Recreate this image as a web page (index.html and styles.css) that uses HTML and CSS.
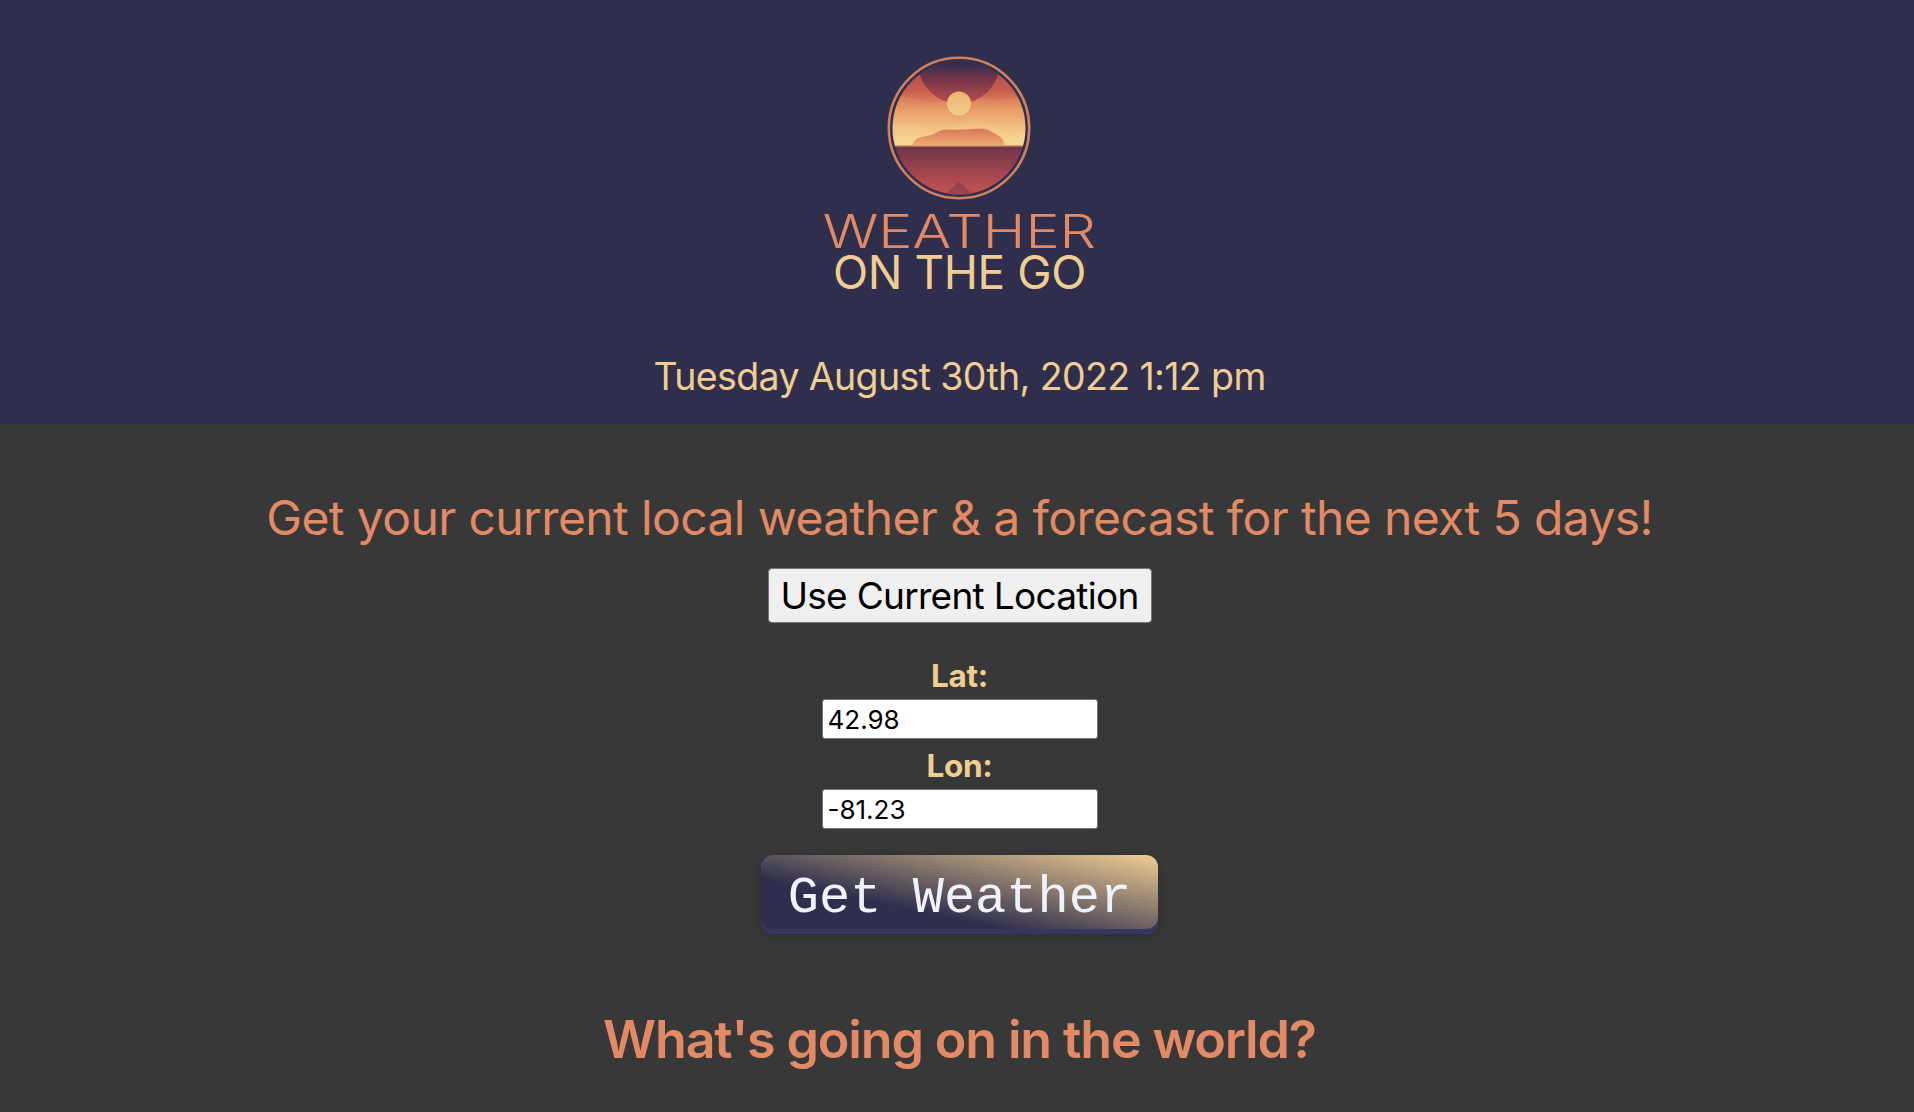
FILE: index.html
```html
<!DOCTYPE html>
<html lang="en">
<head>
<meta charset="utf-8">
<title>Weather on the Go</title>
<link rel="stylesheet" href="styles.css">
</head>
<body>
<header class="site-header">
  <div class="logo">
    <svg class="logo-mark" width="146" height="146" viewBox="0 0 146 146" aria-hidden="true">
      <defs>
        <linearGradient id="sky" x1="0" y1="0" x2="0" y2="1">
          <stop offset="0" stop-color="#a9414f"/>
          <stop offset="0.36" stop-color="#c95f50"/>
          <stop offset="0.58" stop-color="#e99a66"/>
          <stop offset="0.8" stop-color="#f2c682"/>
          <stop offset="1" stop-color="#f7e49c"/>
        </linearGradient>
        <linearGradient id="dome" x1="0" y1="0" x2="0" y2="1">
          <stop offset="0.5" stop-color="#2f2b4c"/>
          <stop offset="0.7" stop-color="#753549"/>
          <stop offset="1" stop-color="#b84e4f"/>
        </linearGradient>
        <linearGradient id="sea" x1="0" y1="0" x2="0" y2="1">
          <stop offset="0" stop-color="#70344a"/>
          <stop offset="1" stop-color="#bc5051"/>
        </linearGradient>
        <linearGradient id="rock" x1="0" y1="0" x2="0" y2="1">
          <stop offset="0" stop-color="#d8765a"/>
          <stop offset="1" stop-color="#efae72"/>
        </linearGradient>
        <linearGradient id="sun" x1="0" y1="0" x2="0" y2="1">
          <stop offset="0" stop-color="#eeb074"/>
          <stop offset="1" stop-color="#f3cd88"/>
        </linearGradient>
        <clipPath id="scene"><circle cx="73" cy="73" r="66.5"/></clipPath>
      </defs>
      <circle cx="73" cy="73" r="70.2" fill="none" stroke="#cf8160" stroke-width="2.6"/>
      <g clip-path="url(#scene)">
        <rect x="0" y="6" width="146" height="85" fill="url(#sky)"/>
        <path d="M0 46 Q14 38 30 44 T62 46 T100 44 T146 40 V91 H0Z" fill="#f0b477" opacity=".16"/>
        <path d="M0 72 Q16 64 34 72 T74 70 T112 72 T146 66 V91 H0Z" fill="#f6e098" opacity=".14"/>
        <circle cx="73" cy="7.500" r="41" fill="url(#dome)"/>
        <circle cx="73" cy="48.500" r="12" fill="url(#sun)"/>
        <path d="M26 91 Q28 84 34 82.500 L47 79.500 Q54 74.500 60 74.500 Q80 75 96 73.500 Q102 74 106 77 L114 81.500 Q118 85 119 91Z" fill="url(#rock)"/>
        <rect x="0" y="91" width="146" height="42" fill="url(#sea)"/>
        <rect x="0" y="133" width="146" height="13" fill="#bc5051"/>
        <path d="M58 141 L73 126 L88 141Z" fill="#9a4350"/>
        <rect x="0" y="90" width="146" height="1.500" fill="#dba070"/>
      </g>
    </svg>
    <div class="logo-title">WEATHER</div>
    <div class="logo-subtitle">ON THE GO</div>
  </div>
  <p class="clock">Tuesday August 30th, 2022 1:12 pm</p>
</header>
<main class="content">
  <h2 class="tagline">Get your current local weather &amp; a forecast for the next 5 days!</h2>
  <button class="locate" type="button">Use Current Location</button>
  <form class="coords">
    <label class="coord-label" for="lat">Lat:</label>
    <input class="coord-input" id="lat" type="text" value="42.98">
    <label class="coord-label" for="lon">Lon:</label>
    <input class="coord-input" id="lon" type="text" value="-81.23">
    <button class="get-weather" type="button">Get Weather</button>
  </form>
  <h2 class="news-title">What's going on in the world?</h2>
</main>
</body>
</html>
```
FILE: styles.css
```css
html, body {
  margin: 0;
  height: 100%;
  overflow: hidden;
  background: #383838;
  font-family: Inter, "Liberation Sans", sans-serif;
}

.site-header {
  height: 424px;
  box-sizing: border-box;
  padding: 55px 0 0 5px;
  background: #2f2f4d;
  display: flex;
  flex-direction: column;
  align-items: center;
}

.logo {
  display: flex;
  flex-direction: column;
  align-items: center;
}

.logo-mark {
  display: block;
}

.logo-title {
  margin-top: 10px;
  font-size: 46px;
  line-height: 41px;
  font-weight: 300;
  transform: scaleX(1.25);
  color: #e28a66;
}

.logo-subtitle {
  font-size: 46px;
  line-height: 40px;
  font-weight: 400;
  letter-spacing: -0.4px;
  color: #f0cd92;
}

.clock {
  margin: 63px 0 0;
  font-size: 37.5px;
  line-height: 44px;
  letter-spacing: -0.62px;
  color: #f0cd92;
}

.content {
  padding-left: 5px;
  display: flex;
  flex-direction: column;
  align-items: center;
}

.tagline {
  margin: 64px 0 0;
  font-size: 48px;
  line-height: 60px;
  font-weight: 400;
  letter-spacing: -0.62px;
  color: #e28a66;
}

.locate {
  margin-top: 20px;
  width: 384px;
  height: 55px;
  padding: 0;
  box-sizing: border-box;
  border: 1px solid #767676;
  border-radius: 4px;
  background: #efefef;
  font-family: inherit;
  font-size: 37px;
  letter-spacing: -0.7px;
  color: #000;
}

.coords {
  margin-top: 35px;
  display: flex;
  flex-direction: column;
  align-items: center;
}

.coord-label {
  font-size: 31.500px;
  line-height: 36px;
  font-weight: 700;
  letter-spacing: -0.3px;
  color: #f0cd92;
}

.coord-input {
  margin-top: 5px;
  margin-bottom: 9px;
  width: 276px;
  height: 40px;
  box-sizing: border-box;
  padding: 0 5px;
  border: 1px solid #767676;
  border-radius: 3px;
  background: #fff;
  font-family: inherit;
  font-size: 26px;
  color: #000;
}

.get-weather {
  margin-top: 17px;
  width: 397px;
  height: 79px;
  padding: 8px 0 0;
  border: 0;
  border-radius: 12px;
  background: linear-gradient(12deg, #2f2f4d 34%, #f0cd92 100%);
  box-shadow: inset 0 -5px 0 #36365f, 0 2px 8px rgba(0, 0, 0, .2);
  font-family: "Liberation Mono", monospace;
  font-size: 52px;
  color: #f0f2fb;
}

.news-title {
  margin: 76px 0 0;
  font-size: 52px;
  line-height: 60px;
  font-weight: 600;
  letter-spacing: -1.15px;
  color: #e28a66;
}
```
